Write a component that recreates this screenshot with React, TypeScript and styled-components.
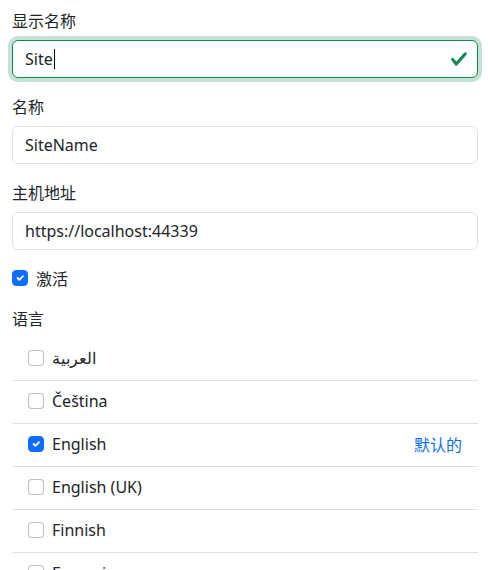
import React from "react";
import styled, { createGlobalStyle } from "styled-components";

const Global = createGlobalStyle`
  html, body { margin: 0; padding: 0; background: #fff; }
  body {
    font-family: "Noto Sans", "Noto Sans CJK SC", sans-serif;
    font-size: 16px;
    line-height: 1.5;
    color: #212529;
  }
  * { box-sizing: border-box; }
`;

const Page = styled.div`
  padding: 8px 10px 0 12px;
  width: 488px;
  height: 570px;
  overflow: hidden;
`;

const Field = styled.div`
  margin-bottom: 16px;
`;

const Label = styled.div`
  display: block;
  margin-bottom: 8px;
  font-family: "Noto Sans CJK SC", sans-serif;
  line-height: 24px;
  color: #212529;
`;

const Control = styled.div<{ $valid?: boolean }>`
  position: relative;
  display: flex;
  align-items: center;
  height: 38px;
  padding: 6px ${(p) => (p.$valid ? "36px" : "12px")} 6px 12px;
  border: 1px solid ${(p) => (p.$valid ? "#198754" : "#dee2e6")};
  border-radius: 6px;
  background: #fff;
  line-height: 24px;
  color: #212529;
  box-shadow: ${(p) => (p.$valid ? "0 0 0 4px rgba(25,135,84,.25)" : "none")};
`;

const Caret = styled.span`
  display: inline-block;
  width: 1px;
  height: 20px;
  background: #000;
  margin-left: 1px;
`;

const ValidIcon = styled.svg`
  position: absolute;
  right: 9px;
  top: 50%;
  width: 18px;
  height: 18px;
  transform: translateY(-50%);
`;

const CheckBox = styled.span<{ $checked?: boolean }>`
  flex: none;
  display: inline-flex;
  align-items: center;
  justify-content: center;
  width: 16px;
  height: 16px;
  border-radius: 4px;
  border: 1px solid ${(p) => (p.$checked ? "#0d6efd" : "rgba(0,0,0,.25)")};
  background: ${(p) => (p.$checked ? "#0d6efd" : "#fff")};
`;

const FormCheck = styled.div`
  display: flex;
  align-items: center;
  gap: 8px;
  min-height: 24px;
  margin-bottom: 16px;
  font-family: "Noto Sans CJK SC", sans-serif;
`;

const List = styled.div`
  display: flex;
  flex-direction: column;
`;

const Item = styled.div`
  display: flex;
  align-items: center;
  gap: 8px;
  padding: 8px 16px 10px;
  line-height: 24px;
  border-bottom: 1px solid #dee2e6;
`;

const ItemText = styled.span`
  flex: 1;
`;

const DefaultTag = styled.span`
  color: #0d6efd;
  font-family: "Noto Sans CJK SC", sans-serif;
`;

const Tick = () => (
  <svg width="12" height="12" viewBox="0 0 20 20">
    <path
      fill="none"
      stroke="#fff"
      strokeLinecap="round"
      strokeLinejoin="round"
      strokeWidth="3"
      d="m6 10 3 3 6-6"
    />
  </svg>
);

const langs = [
  { name: "العربية", checked: false },
  { name: "Čeština", checked: false },
  { name: "English", checked: true, isDefault: true },
  { name: "English (UK)", checked: false },
  { name: "Finnish", checked: false },
  { name: "Français", checked: false },
];

export default function App() {
  return (
    <>
      <Global />
      <Page>
        <Field>
          <Label>显示名称</Label>
          <Control $valid>
            Site
            <Caret />
            <ValidIcon viewBox="0 0 8 8">
              <path
                fill="#198754"
                d="M2.3 6.73.6 4.53c-.4-1.04.46-1.4 1.1-.8l1.1 1.4 3.4-3.8c.6-.63 1.6-.27 1.2.7l-4 4.6c-.43.5-.8.4-1.1.1z"
              />
            </ValidIcon>
          </Control>
        </Field>
        <Field>
          <Label>名称</Label>
          <Control>SiteName</Control>
        </Field>
        <Field>
          <Label>主机地址</Label>
          <Control>https://localhost:44339</Control>
        </Field>
        <FormCheck>
          <CheckBox $checked>
            <Tick />
          </CheckBox>
          激活
        </FormCheck>
        <Label>语言</Label>
        <List>
          {langs.map((l) => (
            <Item key={l.name}>
              <CheckBox $checked={l.checked}>{l.checked && <Tick />}</CheckBox>
              <ItemText>{l.name}</ItemText>
              {l.isDefault && <DefaultTag>默认的</DefaultTag>}
            </Item>
          ))}
        </List>
      </Page>
    </>
  );
}
